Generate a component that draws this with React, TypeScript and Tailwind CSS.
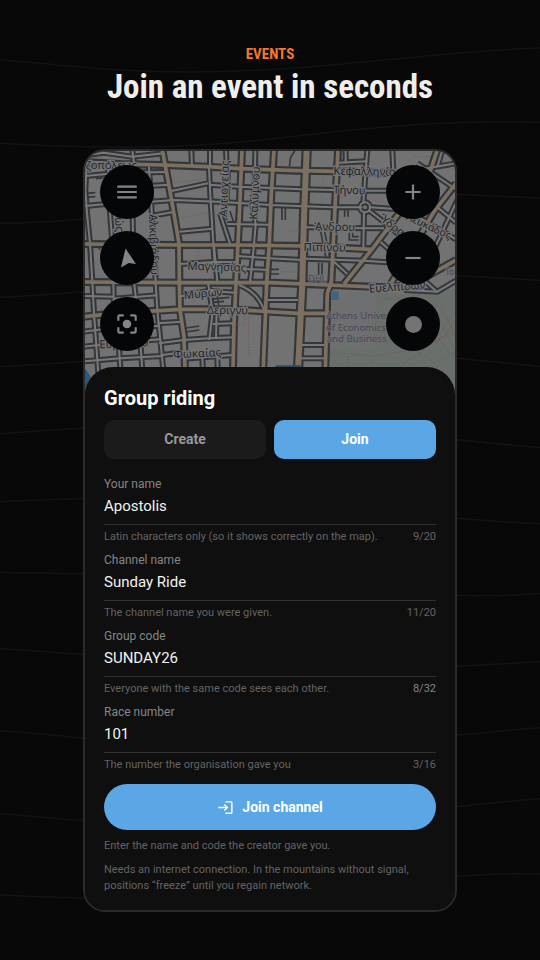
import { useState } from "react";
import { MdAdd, MdCenterFocusStrong, MdLogin, MdMenu, MdRemove } from "react-icons/md";

const contours = [
  "M0 60 C60 64 110 72 190 72 C330 71 420 52 540 48",
  "M0 143 C90 148 170 150 260 140 C360 128 440 120 540 122",
  "M0 223 C60 223 110 216 180 206 C320 186 430 192 540 198",
  "M0 297 C60 295 120 288 200 280 C320 266 430 274 540 280",
  "M0 366 C60 364 120 358 200 352 C320 344 420 354 540 366",
  "M0 433 C40 430 80 428 140 424 C300 414 420 438 540 447",
  "M0 501 C40 500 80 498 140 496 C300 492 420 520 540 523",
  "M0 572 C40 573 80 573 140 574 C300 580 420 602 540 593",
  "M0 648 C40 650 80 654 140 658 C300 676 420 668 540 661",
  "M0 730 C40 732 80 738 140 742 C300 756 420 736 540 727",
  "M0 813 C40 816 80 820 140 824 C300 832 420 806 540 798",
  "M0 894 C40 896 80 897 140 898 C300 900 420 870 540 873",
];

const minorRoads = [
  "M8 45 L4 120 L10 200 L18 280 L25 395 L30 490 L45 700",
  "M72 40 L76 160 L85 280 L88 395 L90 490 L104 580 L112 700",
  "M145 0 L150 40 L146 200 L150 395 L160 485 L170 590 L178 700",
  "M195 50 L204 200 L212 300 L215 400 L220 480 L228 560 L242 700",
  "M0 16 L60 8 L145 20 L238 10",
  "M0 78 L110 68 L248 66",
  "M190 108 L256 104",
  "M200 198 L268 186",
  "M0 168 L90 160 L200 155 L270 150 L400 155 L560 165 L640 168 L745 172 L835 172",
  "M258 124 L372 100",
  "M375 104 L462 110 L560 114 L650 118 L750 120",
  "M375 54 L380 155 L388 280 L392 340",
  "M408 190 L440 288",
  "M430 222 L556 224",
  "M432 54 L428 150",
  "M514 0 L512 110 L506 165 L515 222 L510 285 L498 398",
  "M322 0 L324 50",
  "M378 0 L378 50",
  "M426 0 L428 52",
  "M286 245 L386 236",
  "M288 342 L390 336 L456 336",
  "M390 285 L400 396",
  "M460 318 L556 325 L655 330",
  "M460 356 L555 360",
  "M0 438 L88 440",
  "M88 446 L220 436",
  "M284 440 L375 422 L452 428",
  "M372 398 L386 485 L376 570",
  "M398 485 L396 565",
  "M220 520 L295 515",
  "M0 545 L100 532 L222 528",
  "M0 590 L108 578 L228 568",
  "M0 634 L110 625 L236 618",
  "M225 580 L300 570 L375 565 L448 562",
  "M230 616 L303 606",
  "M300 626 L445 615",
  "M355 622 L358 700",
  "M400 618 L402 700",
  "M386 522 L448 520",
  "M552 450 L642 450",
  "M650 585 L724 585",
  "M650 625 L724 625",
  "M666 232 L750 234 L900 235",
  "M666 326 L840 332 L930 338",
  "M750 335 L790 372",
  "M785 0 L785 40",
  "M762 38 L850 34",
  "M850 0 L845 60 L838 160",
  "M925 0 L928 66",
  "M838 122 L944 122",
  "M840 185 L838 298",
  "M858 172 L945 178",
  "M856 182 L900 216 L955 262",
  "M890 276 L940 320",
  "M985 190 L1116 268",
  "M1000 40 L1116 118",
  "M1075 0 L1060 50",
  "M1060 172 L1116 218",
  "M1120 150 L1040 320",
  "M1000 60 L1116 40",
  "M960 420 L1060 425 L1116 392",
  "M940 378 L1010 380 L1058 425",
  "M465 405 Q520 425 540 480",
];

const mainRoads = [
  "M0 36 L110 42 L240 45 L370 50 L470 56 L640 62 L760 64 L940 70",
  "M235 0 L250 80 L268 180 L285 280 L286 390 L288 480 L300 560 L304 700",
  "M0 282 L280 285 L460 285 L660 288 L860 298",
  "M474 0 L468 150 L462 280 L456 400 L450 520 L446 700",
  "M570 0 L562 130 L556 280 L548 400 L544 500 L536 700",
  "M762 0 L755 130 L748 280 L742 395 L730 430 L723 700",
  "M0 396 L280 398 L560 398 L735 405 L900 412 L980 406 L1116 330",
  "M0 500 L90 490 L290 478 L440 478 L640 490 L725 490",
  "M780 402 L870 290 L960 170 L1040 60 L1060 0",
  "M920 402 L1000 270 L1050 185 L1116 100",
];

const avenue = "M668 0 L660 200 L655 400 L640 700";

const alleys = [
  "M32 72 L62 70 M36 86 L58 84",
  "M5 130 L34 128 M5 142 L34 140",
  "M594 170 L594 210 M604 170 L604 210",
  "M556 358 L585 358 M556 372 L585 372",
  "M306 534 L346 528 M306 546 L346 540",
  "M374 448 L436 442 M374 458 L420 454 M400 436 L404 466",
  "M438 184 L448 214 M426 186 L428 210",
  "M796 248 L796 270 L824 270 M806 248 L806 260 L824 260",
  "M710 245 L726 325 M722 245 L738 325",
  "M782 176 L782 200 M792 176 L792 200",
  "M704 338 L704 374 M714 338 L714 374",
  "M634 0 L620 22 L616 50",
  "M0 286 L60 290 M48 270 L46 300",
];

const paths = [
  "M270 98 L370 84",
  "M286 206 L374 186",
  "M344 296 L340 340",
  "M494 500 L494 612 M456 524 L494 524 M482 480 L482 524",
  "M716 76 L718 104",
  "M616 242 L640 244",
  "M590 365 L636 366",
  "M862 150 L900 156",
  "M990 20 L1040 20 M1068 30 L1112 44",
  "M178 630 L215 624",
  "M738 596 Q790 620 890 616 Q960 600 1010 600 L1112 540",
  "M890 446 Q960 450 1020 430 Q1080 470 1112 560",
  "M860 560 L900 548 L870 540",
  "M792 618 L792 655 M860 620 L866 655",
  "M940 655 L1010 605 L1070 655 M1000 600 L1030 650 L1112 610",
  "M1070 520 L1112 600 M1110 490 L1060 560 L1095 610",
  "M1010 600 L1080 560 L1112 520",
];

type Label = { text: string; x: number; y: number; turn: number; size: number };

const labels: Label[] = [
  { text: "ζοπόλεως", x: 82, y: 58, turn: 0, size: 34 },
  { text: "Αντιοχείας", x: 432, y: 116, turn: -88, size: 34 },
  { text: "Καλύμνου", x: 524, y: 130, turn: -87, size: 34 },
  { text: "Αλκιβιάδου", x: 198, y: 284, turn: 88, size: 34 },
  { text: "ώς", x: 94, y: 224, turn: 85, size: 34 },
  { text: "Μαγνησίας", x: 398, y: 362, turn: 2, size: 34 },
  { text: "Μύρων", x: 358, y: 442, turn: -6, size: 34 },
  { text: "Δεριγνύ", x: 430, y: 492, turn: 1, size: 34 },
  { text: "Φωκαίας", x: 340, y: 622, turn: -3, size: 34 },
  { text: "Ευρυτίου", x: 120, y: 592, turn: -3, size: 34 },
  { text: "Κεφαλληνίας", x: 850, y: 76, turn: 1, size: 34 },
  { text: "Τήνου", x: 796, y: 132, turn: 1, size: 34 },
  { text: "Άνδρου", x: 752, y: 242, turn: 1, size: 34 },
  { text: "Πιπίνου", x: 722, y: 304, turn: 1, size: 34 },
  { text: "Ύδρας", x: 924, y: 240, turn: 38, size: 34 },
  { text: "Λευκάδος", x: 1030, y: 238, turn: 25, size: 32 },
  { text: "Ευελπίδων", x: 940, y: 422, turn: -4, size: 34 },
];

function CityMap() {
  return (
    <svg
      className="block h-full w-full"
      viewBox="3 3 1110 732"
      preserveAspectRatio="xMidYMin slice"
      role="img"
      aria-label="City map"
      fontFamily="'Noto Sans', sans-serif"
    >
      <rect x="-10" y="-10" width="1140" height="760" fill="#727273" />
      <g fill="none" stroke="#33373a" strokeWidth="18">
        {minorRoads.map((d) => (
          <path key={d} d={d} />
        ))}
      </g>
      <g fill="none" stroke="#33373a" strokeWidth="24">
        {mainRoads.map((d) => (
          <path key={d} d={d} />
        ))}
        <path d={avenue} strokeWidth="31" />
        <circle cx="843" cy="172" r="15" strokeWidth="18" />
      </g>
      <g fill="none" stroke="#33373a" strokeWidth="5">
        {alleys.map((d) => (
          <path key={d} d={d} />
        ))}
      </g>
      <path d="M742 422 L900 430 L1060 436 L1116 412 V760 H738 Z" fill="#6e6f70" />
      <path d="M875 430 L1060 436 L1116 412 V760 H738 V600 L875 590 Z" fill="#696f6a" />
      <g fill="none" stroke="#78787a" strokeWidth="6">
        {minorRoads.map((d) => (
          <path key={d} d={d} />
        ))}
        <circle cx="843" cy="172" r="15" />
      </g>
      <g fill="none" stroke="#7c7060" strokeWidth="11">
        {mainRoads.map((d) => (
          <path key={d} d={d} />
        ))}
        <path d={avenue} strokeWidth="18" />
      </g>
      <g fill="none" stroke="#76504f" strokeWidth="2" strokeDasharray="4 5">
        {paths.map((d) => (
          <path key={d} d={d} />
        ))}
      </g>
      <rect x="742" y="424" width="22" height="26" fill="#3f6480" />
      <path d="M570 655 L576 646 H650 V655 Z" fill="#33485a" />
      <path d="M0 650 L26 690 V760 H0 V650 Z" fill="#2b577a" />
      <g fontSize="29" fill="#494852" stroke="#6f6f72" strokeWidth="4" paintOrder="stroke">
        <text x="726" y="508">Athens Univer</text>
        <text x="726" y="542">of Economics</text>
        <text x="728" y="576">and Business</text>
        <text x="673" y="395" fontSize="27">DHL</text>
        <text x="1084" y="376" fontSize="24">Το</text>
      </g>
      <g textAnchor="middle" fill="#242527" stroke="#757577" strokeWidth="7" paintOrder="stroke">
        {labels.map((l) => (
          <text key={l.text} x={l.x} y={l.y} fontSize={l.size} transform={`rotate(${l.turn} ${l.x} ${l.y})`}>
            {l.text}
          </text>
        ))}
      </g>
    </svg>
  );
}

const round = "flex size-[54px] items-center justify-center rounded-full bg-[#040608] text-[#858585]";

function MapControls() {
  return (
    <div className="absolute inset-x-0 top-0 flex justify-between px-[15px] pt-[14px]">
      <div className="flex flex-col gap-3">
        <button type="button" aria-label="Menu" className={round}>
          <MdMenu size={26} />
        </button>
        <button type="button" aria-label="Heading" className={round}>
          <svg width="24" height="24" viewBox="0 0 24 24" fill="currentColor" aria-hidden="true">
            <path d="M10.500 2.500 L21 18 L13.800 17 L6 21.500 Z" />
          </svg>
        </button>
        <button type="button" aria-label="Centre on my location" className={round}>
          <MdCenterFocusStrong size={26} />
        </button>
      </div>
      <div className="flex flex-col gap-3">
        <button type="button" aria-label="Zoom in" className={round}>
          <MdAdd size={26} />
        </button>
        <button type="button" aria-label="Zoom out" className={round}>
          <MdRemove size={26} />
        </button>
        <button type="button" aria-label="Record" className={round}>
          <span className="size-[17px] rounded-full bg-[#757374]" />
        </button>
      </div>
    </div>
  );
}

type FieldProps = { id: string; label: string; initial: string; hint: string; max: number; brightCount?: boolean };

function Field({ id, label, initial, hint, max, brightCount }: FieldProps) {
  const [value, setValue] = useState(initial);
  return (
    <div>
      <label htmlFor={id} className="block text-[12px] leading-4 text-[#858585]">
        {label}
      </label>
      <input
        id={id}
        value={value}
        maxLength={max}
        onChange={(e) => setValue(e.target.value)}
        aria-describedby={`${id}-hint`}
        className="block h-[33px] w-full border-b border-[#303030] bg-transparent pb-1 text-[15px] text-[#f2f2f2] outline-none"
      />
      <div className="mt-1 flex justify-between text-[11px] leading-4 text-[#636363]">
        <span id={`${id}-hint`}>{hint}</span>
        <span className={brightCount ? "text-[#858585]" : ""}>
          {value.length}/{max}
        </span>
      </div>
    </div>
  );
}

export default function App() {
  const [mode, setMode] = useState<"create" | "join">("join");
  const active = "bg-[#5ba7e6] text-white";
  const idle = "bg-[#1b1b1b] text-[#98989d]";

  return (
    <main className="relative min-h-screen overflow-hidden bg-[#080808] px-4 pb-[49px] font-['Roboto',sans-serif]">
      <svg
        className="absolute inset-0 h-full w-full"
        viewBox="0 0 540 960"
        preserveAspectRatio="none"
        fill="none"
        stroke="#131313"
        strokeWidth="1.500"
        aria-hidden="true"
      >
        {contours.map((d) => (
          <path key={d} d={d} />
        ))}
      </svg>

      <header className="relative pt-11 text-center font-['Roboto_Condensed','Liberation_Sans_Narrow','Roboto',sans-serif] font-bold">
        <p className="text-[15px] leading-5 text-[#f3772c]">EVENTS</p>
        <h1 className="mt-0.5 text-[33px] leading-[42px] text-[#efeeea]">Join an event in seconds</h1>
      </header>

      <div className="relative mx-auto mt-[41px] max-w-[374px] overflow-hidden rounded-[22px] border-2 border-[#2b2b2b] bg-[#0f0f0f]">
        <div className="relative h-[244px]">
          <CityMap />
          <MapControls />
        </div>

        <section className="relative -mt-7 rounded-t-[28px] bg-[#0f0f0f] px-[19px] pt-[19px] pb-4">
          <h2 className="text-[20px] leading-6 font-bold text-white">Group riding</h2>

          <div className="mt-2.5 grid grid-cols-2 gap-2 text-[14px] font-bold">
            <button
              type="button"
              aria-pressed={mode === "create"}
              onClick={() => setMode("create")}
              className={`h-[39px] rounded-[10px] ${mode === "create" ? active : idle}`}
            >
              Create
            </button>
            <button
              type="button"
              aria-pressed={mode === "join"}
              onClick={() => setMode("join")}
              className={`h-[39px] rounded-[10px] ${mode === "join" ? active : idle}`}
            >
              Join
            </button>
          </div>

          <form className="mt-[17px]" onSubmit={(e) => e.preventDefault()}>
            <div className="flex flex-col gap-[7px]">
              <Field
                id="name"
                label="Your name"
                initial="Apostolis"
                hint="Latin characters only (so it shows correctly on the map)."
                max={20}
              />
              <Field
                id="channel"
                label="Channel name"
                initial="Sunday Ride"
                hint="The channel name you were given."
                max={20}
              />
              <Field
                id="code"
                label="Group code"
                initial="SUNDAY26"
                hint="Everyone with the same code sees each other."
                max={32}
                brightCount
              />
              <Field
                id="race"
                label="Race number"
                initial="101"
                hint="The number the organisation gave you"
                max={16}
              />
            </div>

            <button
              type="submit"
              className="mt-[11px] flex h-[46px] w-full items-center justify-center gap-2 rounded-full bg-[#5ba7e6] text-[14px] font-bold text-white"
            >
              <MdLogin size={17} aria-hidden="true" />
              Join channel
            </button>
          </form>

          <div className="mt-2 flex flex-col gap-2 text-[11px] leading-4 text-[#636363]">
            <p>Enter the name and code the creator gave you.</p>
            <p>Needs an internet connection. In the mountains without signal, positions “freeze” until you regain network.</p>
          </div>
        </section>
      </div>
    </main>
  );
}
